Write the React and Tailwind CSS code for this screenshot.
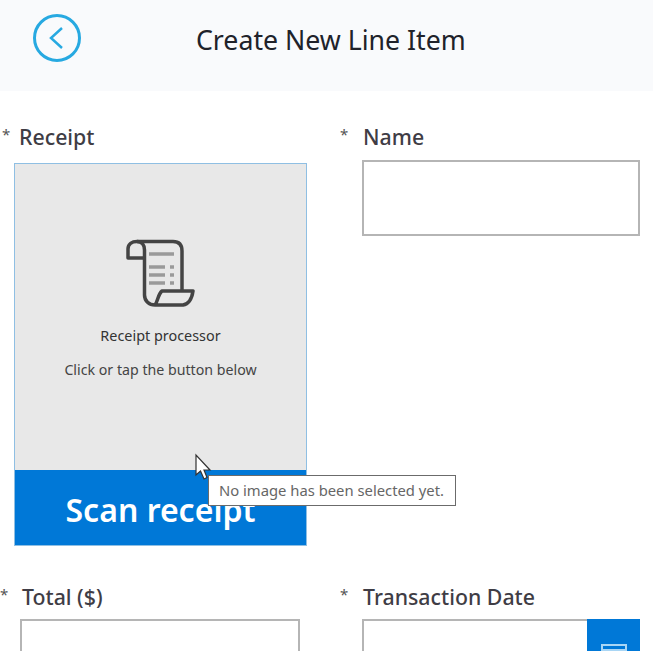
const font = { fontFamily: '"Noto Sans", "Open Sans", sans-serif' };

function FieldLabel({ text, starWidth, className = '' }) {
  return (
    <div className={`flex items-start h-[26px] text-[21.3px] leading-[28px] font-medium text-[#3f3d45] ${className}`}>
      <span className={`text-[15px] leading-[22px] font-normal text-[#555] ${starWidth}`}>*</span>
      <span>{text}</span>
    </div>
  );
}

function ReceiptIcon() {
  return (
    <svg width="72" height="72" viewBox="0 0 72 72" fill="none">
      <path d="M19 20 H3 V11 C3 6 7 3.5 12 3.5 H48 C54 3.5 57 7 57 13 V53" stroke="#444" strokeWidth="3.5" strokeLinejoin="round" />
      <path d="M12 3.5 C17 3.5 19.5 7 19.5 12 V57 C19.5 63 24 67 30 67 H58 C64 66 67 60 68 53 H37 C33 56 33 63 30 67" stroke="#444" strokeWidth="3.5" strokeLinejoin="round" />
      <path d="M24 16 H49" stroke="#9a9a9a" strokeWidth="3.5" />
      <path d="M24 29 H40 M24 37 H40 M24 45 H40" stroke="#9a9a9a" strokeWidth="3.5" />
      <path d="M45 29 H49 M45 37 H49 M45 45 H49" stroke="#9a9a9a" strokeWidth="3.5" />
    </svg>
  );
}

export default function App() {
  return (
    <div className="w-[653px] h-[651px] overflow-hidden bg-white relative" style={font}>
      {/* Header */}
      <div className="h-[91px] bg-[#f9fafc] flex items-start">
        <div className="w-[196px] shrink-0 pl-[33px] pt-[14px]">
          <div className="w-[48px] h-[48px] rounded-full border-[3px] border-[#27a9e1] flex items-center justify-center">
            <svg width="16" height="24" viewBox="0 0 16 24" fill="none" className="mr-[3px]">
              <path d="M14 2 L3 12 L14 22" stroke="#27a9e1" strokeWidth="2.5" />
            </svg>
          </div>
        </div>
        <h1 className="text-[26.7px] leading-[36px] pt-[22px] font-normal text-[#20222a]">Create New Line Item</h1>
      </div>

      {/* First row */}
      <div className="flex pt-[32px]">
        <div className="w-[340px] shrink-0">
          <FieldLabel text="Receipt" starWidth="w-[19px] pl-[2px]" />
          <div className="ml-[14px] mt-[14px] w-[293px] h-[383px] border border-[#8fbfe3] bg-[#e8e8e8] flex flex-col">
            <div className="flex-1 flex flex-col items-center pt-[74px]">
              <ReceiptIcon />
              <p className="mt-[16px] text-[14.4px] leading-[20px] text-[#333]">Receipt processor</p>
              <p className="mt-[14px] text-[14.2px] leading-[20px] text-[#444]">Click or tap the button below</p>
            </div>
            <div className="h-[75px] pt-[2px] bg-[#0078d7] text-white text-[32px] leading-[75px] font-semibold text-center">
              Scan receipt
            </div>
          </div>
        </div>
        <div>
          <FieldLabel text="Name" starWidth="w-[23px]" />
          <div className="ml-[22px] mt-[11px] w-[278px] h-[76px] border-2 border-[#b5b5b5] bg-white" />
        </div>
      </div>

      {/* Second row */}
      <div className="flex pt-[37px]">
        <div className="w-[340px] shrink-0">
          <FieldLabel text="Total ($)" starWidth="w-[22px]" />
          <div className="ml-[20px] mt-[10px] w-[280px] h-[77px] border-2 border-[#b5b5b5] bg-white" />
        </div>
        <div>
          <FieldLabel text="Transaction Date" starWidth="w-[23px]" />
          <div className="ml-[22px] mt-[10px] w-[278px] h-[77px] border-2 border-[#b5b5b5] bg-white flex justify-end">
            <div className="w-[53px] bg-[#0078d7] -mt-[2px] -mr-[2px] flex justify-center pt-[25px]">
              <div className="w-[26px] h-[20px] border-2 border-[#a9d6f5]">
                <div className="h-[5px] border-b-2 border-[#a9d6f5]" />
              </div>
            </div>
          </div>
        </div>
      </div>

      {/* Tooltip + pointer sit over the card */}
      <div className="absolute left-[208px] top-[475px] w-[248px] h-[31px] bg-white border border-[#6b6b6b] text-[14.8px] leading-[29px] text-[#666] pl-[10px] whitespace-nowrap">
        No image has been selected yet.
      </div>
      <svg className="absolute left-[194px] top-[453px]" width="18" height="28" viewBox="0 0 18 28">
        <path d="M2 2 V22 L6.5 18 L10 26 L13 24.5 L10 17 H16 Z" fill="#fff" stroke="#333" strokeWidth="1.2" />
      </svg>
    </div>
  );
}
